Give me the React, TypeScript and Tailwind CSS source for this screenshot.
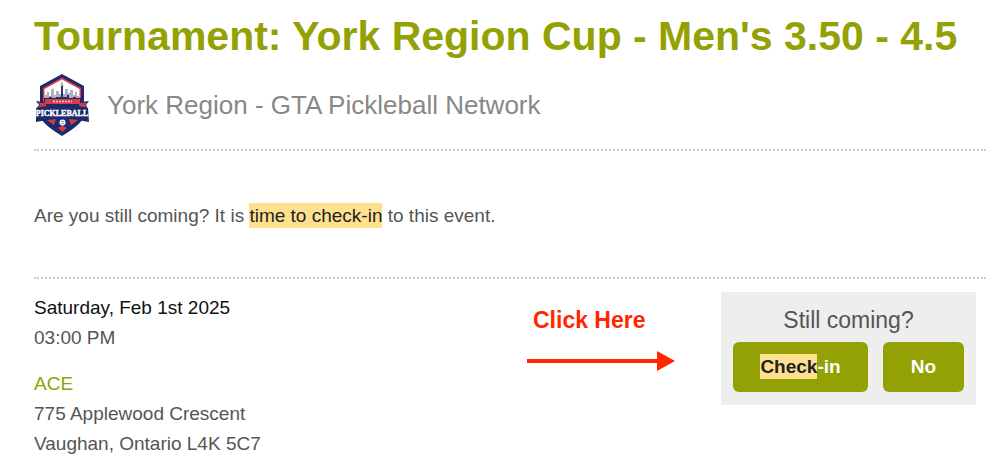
function ClubLogo() {
  return (
    <svg viewBox="0 0 60 66" className="h-[66px] w-[60px] shrink-0" role="img" aria-label="Club logo">
      <path d="M28 2 L50 14 V44 Q48 52 28 64 Q8 52 6 44 V14 Z" fill="#1d2a6b" />
      <path d="M28 5.5 L47 16 V30 H9 V16 Z" fill="#e0404c" />
      <path d="M28 7.5 L45.500 17 V30 H10.500 V17 Z" fill="#fff" />
      <path
        d="M11 30 V23 H13 V20 H15 V24 H17 V18 L19 16 L20 18 V23 H22 V19 H25 V22 H27 V15 L26.500 13.500 L28 8 L29.500 13.500 L29 15 V22 H31 V17 H34 V21 H36 V18 H39 V23 H41 V20 H43 V24 H45 V30 Z"
        fill="#a9b0c2"
      />
      <path d="M11 30 V27 H15 V25 H18 V27 H22 V25 H27 V14 H29 V25 H33 V23 H35 V27 H39 V25 H42 V27 H45 V30 Z" fill="#27346f" />
      <path d="M2 29 L10 30 V26 H47 V30 L55 29 L52 33 L54 37 H2 L5 33 Z" fill="#1d2a6b" />
      <path d="M4 30.500 L12 31 V34.500 L4 35.500 L6 33 Z M53 30.500 L45 31 V34.500 L53 35.500 L51 33 Z" fill="#d33846" />
      <rect x="11" y="27" width="35" height="5" fill="#dc3c49" />
      <path d="M19 29.500 H38" stroke="#f3c4c8" strokeWidth="1.500" strokeDasharray="2 1" />
      <path d="M2 36 Q28 30 54 36 L55 50 Q28 44 2 50 Z" fill="#1d2a6b" />
      <text
        x="28"
        y="44"
        textAnchor="middle"
        fontFamily="Liberation Serif, serif"
        fontWeight="700"
        fontSize="8"
        fill="#fff"
        stroke="#fff"
        strokeWidth="0.400"
      >
        PICKLEBALL
      </text>
      <path d="M13 48 L22 47 L20 53 Z M44 48 L35 47 L37 53 Z M24 56 L28.500 53.500 L33 56 L28.500 60 Z" fill="#d33846" />
      <circle cx="28.500" cy="50.500" r="3" fill="#fff" />
      <path d="M27 49.500 H30 M27 51.500 H30" stroke="#8c94b4" />
    </svg>
  );
}

function Arrow() {
  return (
    <svg viewBox="0 0 148 22" className="h-[22px] w-[148px]" aria-hidden="true">
      <path d="M0 9 H130 V1 L148 11 L130 21 V13 H0 Z" fill="#ff2600" />
    </svg>
  );
}

export default function App() {
  return (
    <main className="bg-white pr-4 pb-2 pl-[34px] font-['Liberation_Sans',Arial,sans-serif] text-[19px] leading-[30px] text-[#555]">
      <header className="border-b-2 border-dotted border-[#ccc] pt-2 pb-[11px]">
        <h1 className="text-[41px] leading-[56px] font-bold text-[#94a104]">
          Tournament: York Region Cup - Men's 3.50 - 4.5
        </h1>
        <div className="mt-2 flex items-center gap-[13px]">
          <ClubLogo />
          <h2 className="text-[26px] leading-9 text-[#888]">York Region - GTA Pickleball Network</h2>
        </div>
      </header>

      <section className="border-b-2 border-dotted border-[#ccc] pt-[50px] pb-[46px]">
        <p>
          Are you still coming? It is <mark className="bg-[#ffe08f] py-0.5 text-[#222]">time to check-in</mark> to this event.
        </p>
      </section>

      <section className="flex items-start pt-[13px]">
        <div className="flex-1 pt-px">
          <p className="text-[#111]">Saturday, Feb 1st 2025</p>
          <p>03:00 PM</p>
          <address className="mt-4 not-italic">
            <a href="#venue" className="text-[#94a104]">
              ACE
            </a>
            <br />
            775 Applewood Crescent
            <br />
            Vaughan, Ontario L4K 5C7
          </address>
        </div>
        <div className="mr-[46px] flex flex-col pt-[13px]">
          <p className="pl-1.5 text-[23px] font-bold text-[#ff2600]">Click Here</p>
          <div className="mt-[15px]">
            <Arrow />
          </div>
        </div>
        <aside className="mr-2.5 bg-[#eee] px-3 pt-2.5 pb-[13px] text-center">
          <p className="pb-1 text-[23px] leading-9">Still coming?</p>
          <div className="flex gap-[15px]">
            <button type="button" className="h-[50px] w-[135px] rounded-md bg-[#94a104] font-bold text-white">
              <mark className="bg-[#ffe08f] py-0.5 text-[#222]">Check</mark>-in
            </button>
            <button type="button" className="h-[50px] w-[81px] rounded-md bg-[#94a104] font-bold text-white">
              No
            </button>
          </div>
        </aside>
      </section>
    </main>
  );
}
